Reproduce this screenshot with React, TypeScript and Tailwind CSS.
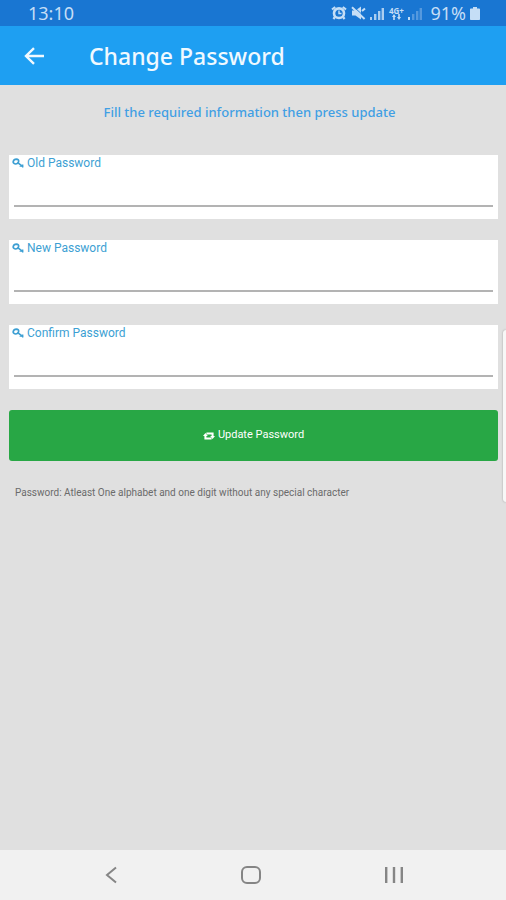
import { useState } from "react";

interface PasswordFieldProps {
    id: string;
    label: string;
    value: string;
    onChange: (value: string) => void;
}

const KeyIcon = () => (
    <svg width="12" height="10" viewBox="0 0 12 10" fill="none" stroke="currentColor" aria-hidden="true">
        <path d="M3.4 6Q1 5.4 1.2 3.6 1.8 1.2 4.4 1.2 7 1.4 6.6 3.6 6 5.8 3.4 6Z" strokeWidth="1.7" />
        <path d="M5.8 4.6 11.2 9.2M8.4 6.2V8.8M10.6 6.4V9.4" strokeWidth="1.6" />
    </svg>
);

const RetweetIcon = () => (
    <svg width="12" height="8" viewBox="0 0 12 8" fill="none" stroke="currentColor" aria-hidden="true">
        <path d="M3.4 1.6H9.6V4.8M8.6 6.4H2.4V3.2" strokeWidth="2" />
        <path d="M0 4 2.4 1 4.8 4ZM7.2 4H12L9.6 7Z" fill="currentColor" stroke="none" />
    </svg>
);

/**
 * Android style status bar: clock on the left, indicators on the right.
 */
function StatusBar() {
    return (
        <div className="flex h-[26px] items-center justify-between bg-[#1976d2] pl-7 pr-[26px] text-[#c5def6]">
            <span className="text-[18px] leading-6">13:10</span>
            <div className="flex items-center gap-1">
                {/* alarm */}
                <svg width="16" height="14" viewBox="0 0 16 14" fill="none" stroke="currentColor" aria-hidden="true">
                    <ellipse cx="8" cy="7.2" rx="5" ry="4.8" strokeWidth="2.6" />
                    <path d="M1 3.5 4.2 1M15 3.5 11.8 1M3.8 11.2 2.4 13M12.2 11.2 13.6 13" strokeWidth="2.2" />
                    <path d="M8 4.5V7.5H10.5" strokeWidth="1.4" />
                </svg>
                {/* muted */}
                <svg width="15" height="14" viewBox="0 0 15 14" aria-hidden="true">
                    <path d="M1 4.5H4.5L10 .5V13.5L4.5 9.5H1Z" fill="currentColor" />
                    <path d="M2.8.8 14.4 11.6" stroke="#1976d2" strokeWidth="1" />
                    <path d="M1 1.2 13.6 13M11 5 14 2.4" stroke="currentColor" strokeWidth="2" />
                </svg>
                <svg width="14" height="13" viewBox="0 0 14 13" fill="currentColor" aria-hidden="true">
                    <path d="M0 10H2V13H0ZM4 7H6.4V13H4ZM8 4H10.4V13H8ZM11.6 1H14V13H11.6Z" opacity=".85" />
                </svg>
                <span className="flex w-4 flex-col items-center">
                    <span className="text-[8px] font-bold leading-[7px]">4G+</span>
                    <svg width="9" height="6" viewBox="0 0 9 6" fill="currentColor" aria-hidden="true">
                        <path d="M0 3 2 0 4 3H2.8V6H1.2V3ZM5 3H6.2V0H7.8V3H9L7 6Z" />
                    </svg>
                </span>
                <svg width="14" height="13" viewBox="0 0 14 13" fill="currentColor" aria-hidden="true">
                    <path d="M0 10H2V13H0Z" />
                    <path d="M4 7H6.4V13H4ZM8 4H10.4V13H8ZM11.6 1H14V13H11.6Z" opacity=".35" />
                </svg>
                <span className="pl-1 text-[18px] leading-6">91%</span>
                <svg width="10" height="13" viewBox="0 0 10 13" fill="currentColor" aria-hidden="true">
                    <path d="M3 0H7V1.5H9.2Q10 1.5 10 2.3V12.2Q10 13 9.2 13H.8Q0 13 0 12.2V2.3Q0 1.5.8 1.5H3Z" />
                </svg>
            </div>
        </div>
    );
}

function PasswordField({ id, label, value, onChange }: PasswordFieldProps) {
    return (
        <div className="h-16 bg-white px-[5px]">
            <label
                htmlFor={id}
                className="-ml-0.5 flex h-4 items-center gap-[3px] font-['Roboto',sans-serif] text-[12px] leading-4 text-[#3d9fd3]"
            >
                <KeyIcon />
                {label}
            </label>
            <input
                id={id}
                type="password"
                value={value}
                onChange={(e) => onChange(e.target.value)}
                className="block h-9 w-full border-b-2 border-[#b3b3b3] bg-transparent text-sm text-gray-800 outline-none"
            />
        </div>
    );
}

function NavigationBar() {
    return (
        <nav className="grid h-[50px] grid-cols-[1fr_136px_132px_1fr] bg-[#f1f1f1] pr-1 text-[#858585]">
            <button type="button" aria-label="Back" className="flex items-center justify-end">
                <svg width="12" height="18" viewBox="0 0 12 18" fill="none" stroke="currentColor" strokeWidth="2" aria-hidden="true">
                    <path d="M11 1.5 2 9 11 16.5" />
                </svg>
            </button>
            <button type="button" aria-label="Home" className="col-span-2 mx-auto flex items-center">
                <svg width="20" height="18" viewBox="0 0 20 18" fill="none" stroke="currentColor" strokeWidth="2" aria-hidden="true">
                    <rect x="1" y="1" width="18" height="16" rx="5" />
                </svg>
            </button>
            <button type="button" aria-label="Recent apps" className="flex items-center">
                <svg width="18" height="16" viewBox="0 0 18 16" fill="currentColor" aria-hidden="true">
                    <path d="M0 0H2.4V16H0ZM7.8 0H10.2V16H7.8ZM15.6 0H18V16H15.6Z" />
                </svg>
            </button>
        </nav>
    );
}

export default function App() {
    const [oldPassword, setOldPassword] = useState("");
    const [newPassword, setNewPassword] = useState("");
    const [confirmPassword, setConfirmPassword] = useState("");

    return (
        <div className="relative flex min-h-screen flex-col bg-[#e0e0e0] font-['Noto_Sans',sans-serif]">
            <StatusBar />

            <header className="flex h-[59px] items-center bg-[#1e9ff2] pl-6 text-[#f0f9ff]">
                <button type="button" aria-label="Go back" className="w-[65px]">
                    <svg width="21" height="18" viewBox="0 0 21 18" fill="none" stroke="currentColor" strokeWidth="2.4" aria-hidden="true">
                        <path d="M20 9H2M10 1.2 2 9 10 16.8" />
                    </svg>
                </button>
                <h1 className="text-[23px] font-medium leading-8">Change Password</h1>
            </header>

            <main className="flex-1 pl-[9px] pr-2">
                <p className="pt-[17px] pr-2 text-center text-[13px] font-medium leading-5 text-[#419fe4]">
                    Fill the required information then press update
                </p>

                <form onSubmit={(e) => e.preventDefault()} className="mt-[33px] flex flex-col gap-[21px]">
                    <PasswordField id="old-password" label="Old Password" value={oldPassword} onChange={setOldPassword} />
                    <PasswordField id="new-password" label="New Password" value={newPassword} onChange={setNewPassword} />
                    <PasswordField id="confirm-password" label="Confirm Password" value={confirmPassword} onChange={setConfirmPassword} />
                    <button
                        type="submit"
                        className="flex h-[51px] items-center justify-center gap-[3px] rounded-[3px] bg-[#28a745] font-['Roboto',sans-serif] text-[11px] text-white"
                    >
                        <RetweetIcon />
                        Update Password
                    </button>
                </form>

                <p className="mt-6 pl-1.5 font-['Roboto',sans-serif] text-[10px] leading-4 text-[#6b6b6b]">
                    Password: Atleast One alphabet and one digit without any special character
                </p>
            </main>

            <NavigationBar />

            {/* edge panel handle */}
            <div className="absolute right-0 top-[330px] h-[172px] w-[3px] rounded-l-[3px] bg-[#f7f7f7] shadow-[0_0_2px_#999999]" />
        </div>
    );
}
